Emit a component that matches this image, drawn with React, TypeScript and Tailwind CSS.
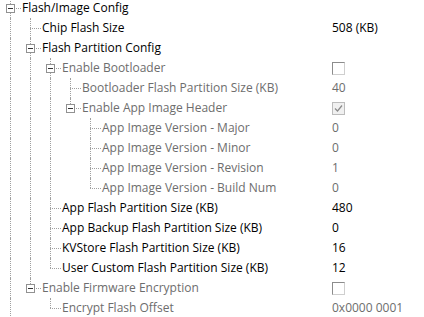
import React from 'react'

type Row = {
  label: string
  level: number
  anc: boolean[]
  last?: boolean
  box?: boolean
  dim?: boolean
  value?: string
  check?: 'off' | 'on'
}

const ROWS: Row[] = [
  { label: 'Flash/Image Config', level: 0, anc: [], box: true },
  { label: 'Chip Flash Size', level: 1, anc: [true], value: '508 (KB)' },
  { label: 'Flash Partition Config', level: 1, anc: [true], box: true },
  { label: 'Enable Bootloader', level: 2, anc: [true, true], box: true, dim: true, check: 'off' },
  { label: 'Bootloader Flash Partition Size (KB)', level: 3, anc: [true, true, true], dim: true, value: '40' },
  { label: 'Enable App Image Header', level: 3, anc: [true, true, true], last: true, box: true, dim: true, check: 'on' },
  { label: 'App Image Version - Major', level: 4, anc: [true, true, true, false], dim: true, value: '0' },
  { label: 'App Image Version - Minor', level: 4, anc: [true, true, true, false], dim: true, value: '0' },
  { label: 'App Image Version - Revision', level: 4, anc: [true, true, true, false], dim: true, value: '1' },
  { label: 'App Image Version - Build Num', level: 4, anc: [true, true, true, false], last: true, dim: true, value: '0' },
  { label: 'App Flash Partition Size (KB)', level: 2, anc: [true, true], value: '480' },
  { label: 'App Backup Flash Partition Size (KB)', level: 2, anc: [true, true], value: '0' },
  { label: 'KVStore Flash Partition Size (KB)', level: 2, anc: [true, true], value: '16' },
  { label: 'User Custom Flash Partition Size (KB)', level: 2, anc: [true, true], last: true, value: '12' },
  { label: 'Enable Firmware Encryption', level: 1, anc: [true], last: true, box: true, dim: true, check: 'off' },
  { label: 'Encrypt Flash Offset', level: 2, anc: [true, false], last: true, dim: true, value: '0x0000 0001' },
]

function PassCell({ on }: { on: boolean }) {
  return (
    <div className="relative w-5 h-5 shrink-0">
      {on && <div className="absolute left-[10px] top-0 h-5 border-l border-dotted border-[#a0a0a0]" />}
    </div>
  )
}

function NodeCell({ last, box }: { last?: boolean; box?: boolean }) {
  return (
    <div className="relative w-5 h-5 shrink-0">
      <div className={`absolute left-[10px] top-0 border-l border-dotted border-[#a0a0a0] ${last ? 'h-[10px]' : 'h-5'}`} />
      <div className="absolute left-[10px] top-[10px] w-[11px] border-t border-dotted border-[#a0a0a0]" />
      {box && (
        <div className="absolute left-[6px] top-[6px] w-[9px] h-[9px] border border-[#919191] bg-white flex items-center justify-center">
          <div className="w-[5px] h-px bg-[#333]" />
        </div>
      )}
    </div>
  )
}

function Check({ on }: { on: boolean }) {
  if (on) {
    return (
      <div className="w-[13px] h-[13px] border border-[#bcbcbc] bg-[#f0f0f0] flex items-center justify-center">
        <svg width="9" height="9" viewBox="0 0 9 9">
          <path d="M1 4.5 L3.5 7 L8 1.5" fill="none" stroke="#8a8a8a" strokeWidth="1.2" />
        </svg>
      </div>
    )
  }
  return <div className="w-[13px] h-[13px] border border-t-[#8c8c8c] border-l-[#8c8c8c] border-r-[#cfcfcf] border-b-[#cfcfcf] bg-white" />
}

export default function App() {
  return (
    <div className="w-[424px] h-[317px] overflow-hidden bg-white font-['Open_Sans',sans-serif] text-[12px]">
      <div className="-mt-[2px]">
        {ROWS.map((r, i) => (
          <div key={i} className="flex h-5 items-center">
            <div className="w-[332px] flex items-center shrink-0">
              {r.anc.map((a, k) => <PassCell key={k} on={a} />)}
              <NodeCell last={r.last} box={r.box} />
              <span className={`pl-[2px] leading-5 whitespace-nowrap ${r.dim ? 'text-[#6d6d6d]' : 'text-black'}`}>{r.label}</span>
            </div>
            <div className="flex items-center">
              {r.check ? (
                <Check on={r.check === 'on'} />
              ) : (
                <span className={`leading-5 whitespace-nowrap ${r.dim ? 'text-[#6d6d6d]' : 'text-black'}`}>{r.value}</span>
              )}
            </div>
          </div>
        ))}
      </div>
    </div>
  )
}
